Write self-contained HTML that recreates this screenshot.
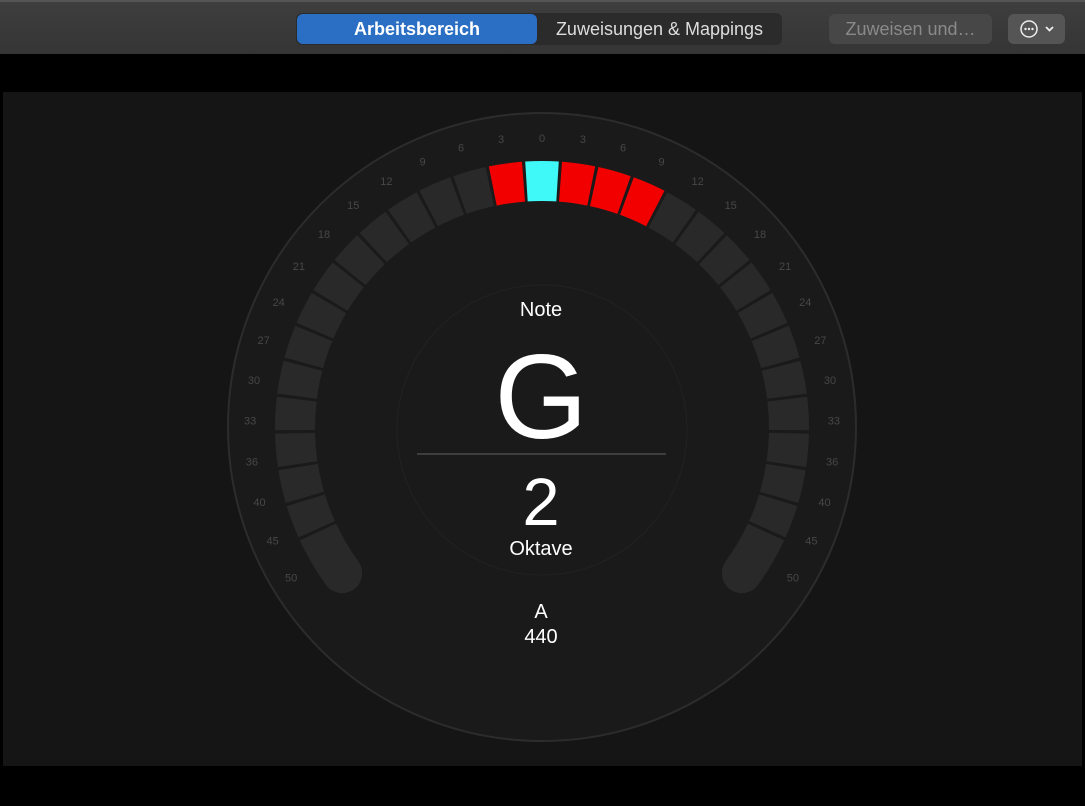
<!DOCTYPE html>
<html><head><meta charset="utf-8"><style>
html,body{margin:0;padding:0;background:#000;}
body{width:1085px;height:806px;position:relative;overflow:hidden;font-family:"Liberation Sans",sans-serif;}
#tb{position:absolute;left:0;top:0;width:1085px;height:54px;background:linear-gradient(#3e3e3e,#353535);border-top:2px solid #555;box-sizing:border-box;}
.seg{position:absolute;top:12px;height:30px;border-radius:6px;}
#main{position:absolute;left:3px;top:92px;width:1079px;height:674px;background:#151515;}
</style></head><body>
<div id="tb">
 <div class="seg" style="left:296px;width:486px;background:#2b2b2b;top:11px;height:32px"></div>
 <div class="seg" style="left:297px;width:240px;background:#2a6fc4;color:#fff;font-size:18px;line-height:30px;text-align:center;font-weight:bold">Arbeitsbereich</div>
 <div class="seg" style="left:537px;width:245px;color:#ddd;font-size:18px;line-height:30px;text-align:center">Zuweisungen &amp; Mappings</div>
 <div class="seg" style="left:829px;width:163px;background:#474747;color:#8a8a8a;font-size:18px;line-height:30px;text-align:center">Zuweisen und…</div>
 <div class="seg" style="left:1008px;width:57px;background:#555;color:#eee;">
  <svg width="57" height="30"><circle cx="21" cy="15" r="8" fill="none" stroke="#eee" stroke-width="1.5"/><circle cx="17.5" cy="15" r="1.2" fill="#eee"/><circle cx="21" cy="15" r="1.2" fill="#eee"/><circle cx="24.5" cy="15" r="1.2" fill="#eee"/><path d="M38 13l3.5 3.5 3.5-3.5" fill="none" stroke="#eee" stroke-width="1.8"/></svg>
 </div>
</div>
<div id="main"></div>
<svg id="g" width="1085" height="806" style="position:absolute;left:0;top:0">
 <circle cx="542" cy="427" r="314" fill="#1a1a1a" stroke="#2c2c2c" stroke-width="2"/>
 <g id="segs"></g>
 <g id="labs" font-family="Liberation Sans,sans-serif" font-size="11" fill="#474747" text-anchor="middle"></g>
 <circle cx="542" cy="430" r="145" fill="none" stroke="#222" stroke-width="1"/>
 <line x1="417" y1="454" x2="666" y2="454" stroke="#4a4a4a" stroke-width="1.5"/>
 <g font-family="Liberation Sans,sans-serif" fill="#fff" text-anchor="middle">
  <text x="541" y="316" font-size="20">Note</text>
  <text x="541" y="438" font-size="120">G</text>
  <text x="541" y="525" font-size="67">2</text>
  <text x="541" y="555" font-size="20">Oktave</text>
  <text x="541" y="618" font-size="20">A</text>
  <text x="541" y="643" font-size="20">440</text>
 </g>
</svg>
<script>
var cx=542,cy=428,R1=267,R0=227,s=7.9,h=3.6;
function P(r,a){a=a*Math.PI/180;return [(cx+r*Math.sin(a)).toFixed(1),(cy-r*Math.cos(a)).toFixed(1)];}
var out='',N=15,E=126;
for(var i=-N;i<=N;i++){
 var a0=i*s-h,a1=i*s+h;
 if(i==N)a1=E; if(i==-N)a0=-E;
 var c='#292929';
 if(i==0)c='#3ff8f8';else if(i==-1||i==1||i==2||i==3)c='#f20000';
 var p1=P(R1,a0),p2=P(R1,a1),p3=P(R0,a1),p4=P(R0,a0);
 out+='<path d="M'+p1+' A'+R1+' '+R1+' 0 0 1 '+p2+' L'+p3+' A'+R0+' '+R0+' 0 0 0 '+p4+'Z" fill="'+c+'"/>';
}
var e1=P(247,E),e2=P(247,-E);
out+='<circle cx="'+e1[0]+'" cy="'+e1[1]+'" r="20" fill="#292929"/><circle cx="'+e2[0]+'" cy="'+e2[1]+'" r="20" fill="#292929"/>';
document.getElementById('segs').innerHTML=out;
var L=[3,6,9,12,15,18,21,24,27,30,33,36,40,45,50],lo='';
var p=P(290,0);lo+='<text x="'+p[0]+'" y="'+(+p[1]+4)+'">0</text>';
for(var k=0;k<L.length;k++){var a=(k+1)*8.05;
 var q=P(292,a),r=P(292,-a);
 lo+='<text x="'+q[0]+'" y="'+(+q[1]+4)+'">'+L[k]+'</text><text x="'+r[0]+'" y="'+(+r[1]+4)+'">'+L[k]+'</text>';}
document.getElementById('labs').innerHTML=lo;
</script>
</body></html>
